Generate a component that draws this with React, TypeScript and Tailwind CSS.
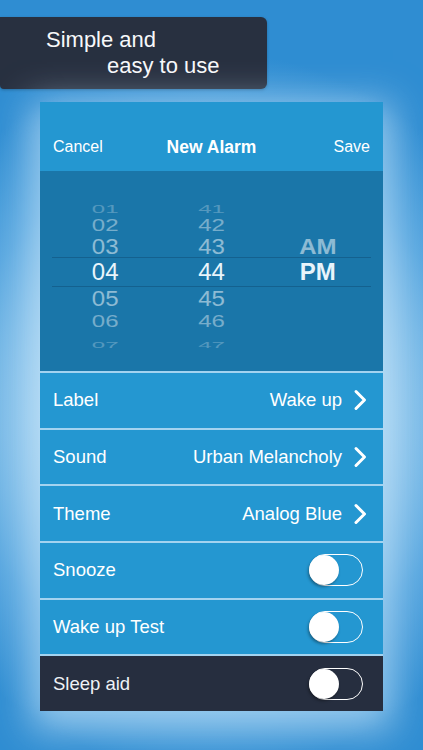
import React from "react";

const pickerRows = [
  { h: "01", m: "41", a: "", row: "h-[16px]", txt: "text-[24px] scale-y-[0.45] opacity-25", sel: false },
  { h: "02", m: "42", a: "", row: "h-[22px]", txt: "text-[24px] scale-y-[0.72] opacity-40", sel: false },
  { h: "03", m: "43", a: "AM", row: "h-[22px]", txt: "text-[24px] scale-y-[0.92] opacity-50", sel: false },
  { h: "04", m: "44", a: "PM", row: "h-[30px]", txt: "text-[24px] text-[#e8f4fb]", sel: true },
  { h: "05", m: "45", a: "", row: "h-[22px]", txt: "text-[24px] scale-y-[0.92] opacity-50", sel: false },
  { h: "06", m: "46", a: "", row: "h-[24px]", txt: "text-[24px] scale-y-[0.72] opacity-40", sel: false },
  { h: "07", m: "47", a: "", row: "h-[10px]", txt: "text-[24px] scale-y-[0.4] opacity-25", sel: false },
];

function Chevron() {
  return (
    <svg width="14" height="22" viewBox="0 0 14 22" className="ml-[11px]">
      <polyline points="3,2.5 11.5,11 3,19.5" fill="none" stroke="#ffffff" strokeWidth="3" strokeLinecap="round" strokeLinejoin="round" />
    </svg>
  );
}

function Toggle() {
  return (
    <div className="mr-[7px] flex h-[32px] w-[54px] items-center rounded-full border-[1.5px] border-white">
      <div className="-ml-[1.5px] h-[30px] w-[30px] rounded-full bg-white shadow-[-1px_2px_3px_rgba(0,0,0,0.35)]" />
    </div>
  );
}

function NavRow({ label, value }: { label: string; value: string }) {
  return (
    <div className="flex h-[56.67px] items-center justify-between border-t-2 border-[#a3d3f0] bg-[#2497d1] pl-[13px] pr-[16px] text-[18.5px] text-white">
      <span>{label}</span>
      <div className="flex items-center">
        <span>{value}</span>
        <Chevron />
      </div>
    </div>
  );
}

function ToggleRow({ label, dark }: { label: string; dark?: boolean }) {
  return (
    <div
      className={
        dark
          ? "flex h-[56.67px] items-center justify-between border-t-2 border-[#a3d3f0] bg-[#262e3f] pl-[13px] pr-[13px] text-[18.5px] text-[#eef2f6]"
          : "flex h-[56.67px] items-center justify-between border-t-2 border-[#a3d3f0] bg-[#2497d1] pl-[13px] pr-[13px] text-[18.5px] text-white"
      }
    >
      <span>{label}</span>
      <Toggle />
    </div>
  );
}

export default function App() {
  return (
    <div className="relative h-[750px] w-[423px] overflow-hidden bg-[#2d8bd0] bg-[radial-gradient(ellipse_80%_48%_at_50%_55%,#d6ecfa_0%,#a9d5f2_45%,#5aa8e0_75%,#2f8dd2_100%)] font-['Liberation_Sans',Arial,sans-serif]">
      <div className="pt-[17px]">
        <div className="flex h-[72px] w-[267px] flex-col rounded-r-[6px] rounded-bl-[4px] bg-[#283040] pt-[10px] text-[22px] leading-[26px] text-[#f7f8fa] shadow-[0_1px_3px_rgba(0,0,0,0.25)]">
          <span className="pl-[46px]">Simple and</span>
          <span className="pl-[107px]">easy to use</span>
        </div>
      </div>

      <div className="ml-[40px] mt-[13px] w-[343px] shadow-[0_10px_35px_10px_rgba(205,232,250,0.6)]">
        <div className="flex h-[69px] items-end bg-[#2497d1] px-[13px] pb-[14px] text-white">
          <div className="flex h-[20px] w-full items-center justify-between">
            <span className="w-[80px] text-[16px]">Cancel</span>
            <span className="text-[17.5px] font-bold">New Alarm</span>
            <span className="w-[80px] text-right text-[16px]">Save</span>
          </div>
        </div>

        <div className="h-[200px] bg-[#1a76a9] pt-[26px]">
          <div className="mx-[12px] flex flex-col">
            {pickerRows.map((r) => (
              <div
                key={r.h}
                className={
                  r.sel
                    ? "grid h-[30px] grid-cols-3 items-center border-y border-[#14618f] text-center leading-none"
                    : "grid grid-cols-3 items-center text-center leading-none text-white " + r.row
                }
              >
                <span className={r.sel ? "text-[24px] text-[#e8f4fb]" : r.txt}>{r.h}</span>
                <span className={r.sel ? "text-[24px] text-[#e8f4fb]" : r.txt}>{r.m}</span>
                <span className={r.sel ? "text-[24px] font-bold text-[#e8f4fb]" : r.txt + " font-bold"}>{r.a}</span>
              </div>
            ))}
          </div>
        </div>

        <NavRow label="Label" value="Wake up" />
        <NavRow label="Sound" value="Urban Melancholy" />
        <NavRow label="Theme" value="Analog Blue" />
        <ToggleRow label="Snooze" />
        <ToggleRow label="Wake up Test" />
        <ToggleRow label="Sleep aid" dark />
      </div>
    </div>
  );
}
